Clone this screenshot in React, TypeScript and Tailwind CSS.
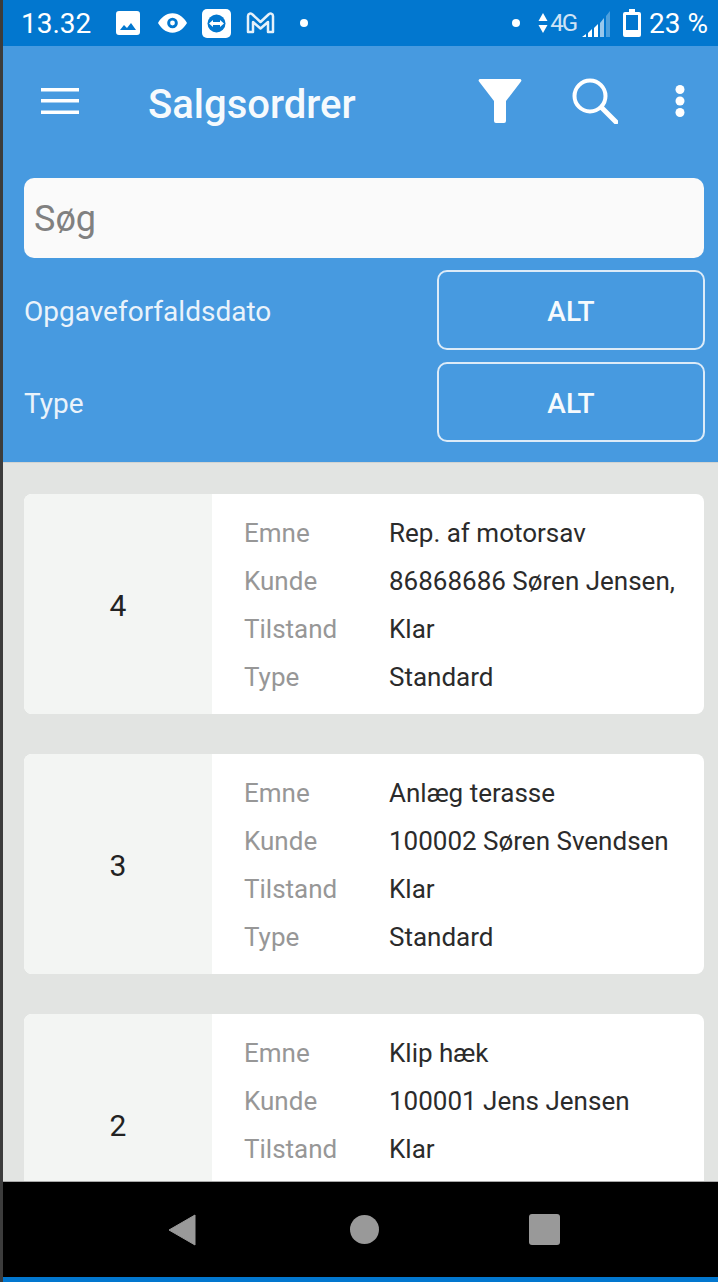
import React from "react";

const rows = [
  { n: "4", v: ["Rep. af motorsav", "86868686 Søren Jensen,", "Klar", "Standard"] },
  { n: "3", v: ["Anlæg terasse", "100002 Søren Svendsen", "Klar", "Standard"] },
  { n: "2", v: ["Klip hæk", "100001 Jens Jensen", "Klar"] },
];
const labels = ["Emne", "Kunde", "Tilstand", "Type"];

function Card({ n, v }: { n: string; v: string[] }) {
  return (
    <div className="flex h-[220px] shrink-0 overflow-hidden rounded-lg bg-white">
      <div className="flex w-[188px] shrink-0 items-center justify-center bg-[#f3f5f3] pt-[2px] text-[30px] text-[#222222]">{n}</div>
      <div className="flex flex-col pt-[15px] pl-[32px]">
        {v.map((val, i) => (
          <div key={labels[i]} className="flex h-[48px] shrink-0 items-center whitespace-nowrap text-[26px]">
            <span className="w-[145px] text-[#979797]">{labels[i]}</span>
            <span className="text-[#2b2b2b]">{val}</span>
          </div>
        ))}
      </div>
    </div>
  );
}

function Filter({ label }: { label: string }) {
  return (
    <div className="-mr-[1px] flex h-[80px] items-center justify-between">
      <span className="pt-[4px] text-[28px] text-[#eaf3fb]">{label}</span>
      <div className="flex h-[80px] w-[268px] items-center justify-center rounded-[10px] border-2 border-[#dcebf8] pt-[4px] text-[28px] font-medium text-[#f6fafd]">ALT</div>
    </div>
  );
}

export default function App() {
  return (
    <div className="flex h-[1282px] w-[718px] overflow-hidden bg-[#e2e4e2] font-['Roboto',sans-serif]">
      <div className="w-[3px] shrink-0 bg-[#3c3c3c]" />
      <div className="flex min-w-0 flex-1 flex-col">
        <div className="flex h-[46px] shrink-0 items-center justify-between bg-[#0277cf] text-white">
          <div className="flex items-center">
            <span className="ml-[18px] pt-[1px] text-[28px] leading-none">13.32</span>
            <svg className="ml-[25px]" width="24" height="24" viewBox="0 0 24 24" fill="white">
              <path fillRule="evenodd" d="M3 0h18a3 3 0 0 1 3 3v18a3 3 0 0 1-3 3H3a3 3 0 0 1-3-3V3a3 3 0 0 1 3-3zM4 19h16l-5-7-4 5-3-3z" />
            </svg>
            <svg className="ml-[18px]" width="29" height="22" viewBox="0 0 30 22" fill="white">
              <path fillRule="evenodd" d="M15 1C8 1 3 6 0 11c3 5 8 10 15 10s12-5 15-10C27 6 22 1 15 1zm0 4.500a5.500 5.500 0 1 1 0 11 5.500 5.500 0 0 1 0-11zm0 3a2.500 2.500 0 1 0 0 5 2.500 2.500 0 0 0 0-5z" />
            </svg>
            <svg className="ml-[15px]" width="29" height="29" viewBox="0 0 29 29">
              <rect width="29" height="29" rx="5" fill="white" />
              <circle cx="14.500" cy="14.500" r="9" fill="#0277cf" />
              <path d="M7 14.500l4-3.500v2h7v-2l4 3.500-4 3.500v-2h-7v2z" fill="white" />
            </svg>
            <svg className="ml-[15px]" width="29" height="24" viewBox="0 0 29 24" fill="none" stroke="white" strokeWidth="2.500" opacity="0.9" strokeLinejoin="round">
              <path d="M2 21V5a2.500 2.500 0 0 1 4.500-1.500L14.500 11l8-7.500A2.500 2.500 0 0 1 27 5v16h-5V11l-7.500 6.500L7 11v10z" />
            </svg>
            <div className="ml-[25px] h-[8px] w-[8px] rounded-full bg-white" />
          </div>
          <div className="flex items-center pr-[10px]">
            <div className="h-[8px] w-[8px] rounded-full bg-white" />
            <svg className="ml-[18px]" width="10" height="22" viewBox="0 0 10 22" fill="white">
              <path d="M5 1l4.500 8H.5zM.5 13h9L5 21z" />
            </svg>
            <span className="ml-[2px] text-[24px] leading-none tracking-[-2px] text-[#cfe3f5]">4G</span>
            <svg className="ml-[6px]" width="28" height="28" viewBox="0 0 28 28" fill="white">
              <path d="M0 28h4v-3l-4 3zM6 28h4v-8l-4 4zM12 28h4V15l-4 4z" />
              <path d="M18 28h4V9l-4 5z" opacity="0.6" />
              <path d="M24 28h4V2l-4 5z" opacity="0.3" />
            </svg>
            <svg className="ml-[13px]" width="18" height="28" viewBox="0 0 18 28">
              <path d="M6 0h6v3h4a2 2 0 0 1 2 2v21a2 2 0 0 1-2 2H2a2 2 0 0 1-2-2V5a2 2 0 0 1 2-2h4z" fill="white" />
              <rect x="3" y="6" width="12" height="15" fill="#0277cf" />
            </svg>
            <span className="ml-[8px] whitespace-nowrap pt-[1px] text-[28px] leading-none">23 %</span>
          </div>
        </div>

        <div className="flex h-[416px] shrink-0 flex-col bg-[#479ae0] pr-[14px] pl-[21px]">
          <div className="flex h-[110px] shrink-0 items-center">
            <svg className="ml-[17px]" width="38" height="26" viewBox="0 0 38 26" fill="white">
              <rect y="0" width="38" height="3.500" />
              <rect y="11" width="38" height="3.500" />
              <rect y="22.500" width="38" height="3.500" />
            </svg>
            <span className="ml-[69px] pt-[7px] text-[40px] font-medium leading-none text-[#f6fafd]">Salgsordrer</span>
            <svg className="ml-auto" width="44" height="44" viewBox="0 0 44 44" fill="white">
              <path d="M2 0h40a1.500 1.500 0 0 1 1 2.500L28 22v20a2 2 0 0 1-2 2h-8a2 2 0 0 1-2-2V22L1 2.500A1.500 1.500 0 0 1 2 0z" />
            </svg>
            <svg className="ml-[50px]" width="46" height="46" viewBox="0 0 46 46" fill="none" stroke="white">
              <circle cx="18" cy="18" r="15.500" strokeWidth="4" />
              <path d="M30 30l14 14" strokeWidth="5" strokeLinecap="round" />
            </svg>
            <svg className="mr-[19px] ml-[57px]" width="10" height="32" viewBox="0 0 10 32" fill="white">
              <circle cx="5" cy="4.500" r="4.500" />
              <circle cx="5" cy="16" r="4.500" />
              <circle cx="5" cy="27.500" r="4.500" />
            </svg>
          </div>
          <div className="mt-[22px] flex h-[80px] shrink-0 items-center rounded-[10px] bg-[#fafafa] px-[10px] pt-[2px] text-[36px] text-[#808080]">Søg</div>
          <div className="mt-[12px] flex flex-col gap-[12px]">
            <Filter label="Opgaveforfaldsdato" />
            <Filter label="Type" />
          </div>
        </div>

        <div className="flex min-h-0 flex-1 flex-col gap-[40px] overflow-hidden border-t border-[#d2d4d2] pt-[31px] pr-[14px] pl-[21px]">
          {rows.map((r) => (
            <Card key={r.n} n={r.n} v={r.v} />
          ))}
        </div>

        <div className="flex h-[96px] shrink-0 items-center border-t border-[#a8a8a8] bg-black">
          <svg className="ml-[165px]" width="28" height="32" viewBox="0 0 28 32" fill="#999999">
            <path d="M27 1v30L1 16z" stroke="#999999" strokeLinejoin="round" />
          </svg>
          <div className="ml-[154px] h-[29px] w-[29px] rounded-full bg-[#999999]" />
          <div className="ml-[150px] h-[31px] w-[31px] rounded-[3px] bg-[#999999]" />
        </div>
        <div className="h-[5px] shrink-0 bg-[#0277cf]" />
      </div>
    </div>
  );
}
